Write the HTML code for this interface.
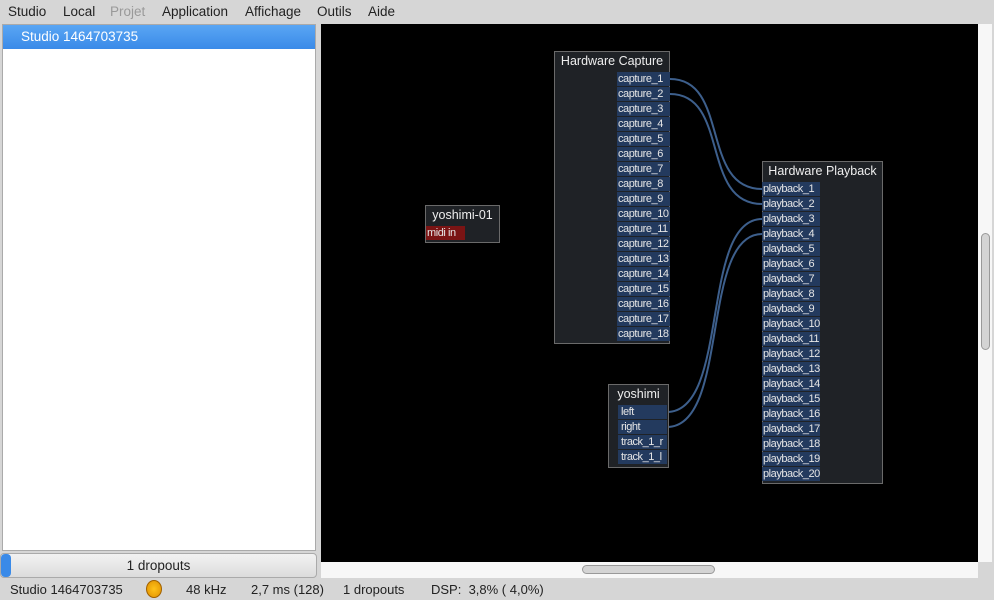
<!DOCTYPE html>
<html><head><meta charset="utf-8"><style>
*{margin:0;padding:0;box-sizing:border-box}
body{width:994px;height:600px;background:#d6d6d6;font-family:"Liberation Sans",sans-serif;position:relative;overflow:hidden;color:#222}
.a{position:absolute}
.menu span{position:absolute;top:4px;font-size:13.5px}
.box{position:absolute;background:#1f2226;border:1px solid #6a6a6a}
.t{position:absolute;color:#eee;font-size:12.5px;left:0;right:0;text-align:center;top:2px}
.p{position:absolute;height:14px;background:#233a5e;color:#e6e6e6;font-size:11px;letter-spacing:-0.45px;line-height:14px;padding-left:1px;white-space:nowrap;overflow:hidden}
</style></head><body>
<div class="menu">
<span style="left:8px">Studio</span><span style="left:63px">Local</span><span style="left:110px;color:#999">Projet</span><span style="left:162px">Application</span><span style="left:245px">Affichage</span><span style="left:317px">Outils</span><span style="left:368px">Aide</span>
</div>
<div class="a" style="left:2px;top:24px;width:314px;height:527px;background:#fff;border:1px solid #aaa"></div>
<div class="a" style="left:3px;top:25px;width:312px;height:24px;background:linear-gradient(#5aa6f4,#3a8ae8);color:#fff;font-size:13.5px;line-height:24px;padding-left:18px">Studio 1464703735</div>
<div class="a" style="left:0;top:553px;width:317px;height:25px;background:linear-gradient(#f2f2f2,#dcdcdc);border:1px solid #aaa;border-radius:4px;font-size:13.5px;text-align:center;line-height:23px">1 dropouts</div>
<div class="a" style="left:1px;top:554px;width:10px;height:23px;background:#3a8ae8;border-radius:4px"></div>
<div class="a" style="left:321px;top:24px;width:657px;height:538px;background:#000"></div>
<div class="a" style="left:978px;top:24px;width:14px;height:538px;background:#f7f7f7"></div>
<div class="a" style="left:981px;top:233px;width:9px;height:117px;background:#d4d4d4;border:1px solid #999;border-radius:5px"></div>
<div class="a" style="left:321px;top:562px;width:657px;height:16px;background:#f7f7f7"></div>
<div class="a" style="left:582px;top:565px;width:133px;height:9px;background:#d4d4d4;border:1px solid #999;border-radius:5px"></div>
<svg class="a" style="left:0;top:0" width="994" height="600"><g fill="none" stroke="#3d5f8c" stroke-width="2">
<path d="M670 79C730 79 700 189 762 189"/><path d="M670 94C730 94 700 204 762 204"/>
<path d="M667 412C730 412 700 219 762 219"/><path d="M667 427C730 427 700 234 762 234"/></g></svg>
<div class="box" style="left:554px;top:51px;width:116px;height:293px"><div class="t">Hardware Capture</div></div>
<div class="box" style="left:762px;top:161px;width:121px;height:323px"><div class="t">Hardware Playback</div></div>
<div class="box" style="left:425px;top:205px;width:75px;height:38px"><div class="t">yoshimi-01</div></div>
<div class="p" style="left:426px;top:226px;width:39px;background:#7a1414">midi in</div>
<div class="box" style="left:608px;top:384px;width:61px;height:84px"><div class="t">yoshimi</div></div>
<div id="ports"></div>
<script>
var h='';
for(var i=1;i<=18;i++)h+='<div class="p" style="left:617px;top:'+(72+(i-1)*15)+'px;width:53px">capture_'+i+'</div>';
for(var i=1;i<=20;i++)h+='<div class="p" style="left:762px;top:'+(182+(i-1)*15)+'px;width:58px">playback_'+i+'</div>';
['left','right','track_1_r','track_1_l'].forEach(function(n,i){h+='<div class="p" style="left:618px;top:'+(405+i*15)+'px;width:49px;padding-left:3px">'+n+'</div>'});
document.getElementById('ports').innerHTML=h;
</script>
<div class="a" style="top:582px;left:10px;font-size:13px">Studio 1464703735</div>
<div class="a" style="top:580px;left:146px;width:16px;height:18px;border-radius:50%;background:radial-gradient(#ffc21a,#e09000);border:1px solid #a06000"></div>
<div class="a" style="top:582px;left:186px;font-size:13px">48 kHz</div>
<div class="a" style="top:582px;left:251px;font-size:13px">2,7 ms (128)</div>
<div class="a" style="top:582px;left:343px;font-size:13px">1 dropouts</div>
<div class="a" style="top:582px;left:431px;font-size:13px;white-space:pre">DSP:  3,8% ( 4,0%)</div>
</body></html>
